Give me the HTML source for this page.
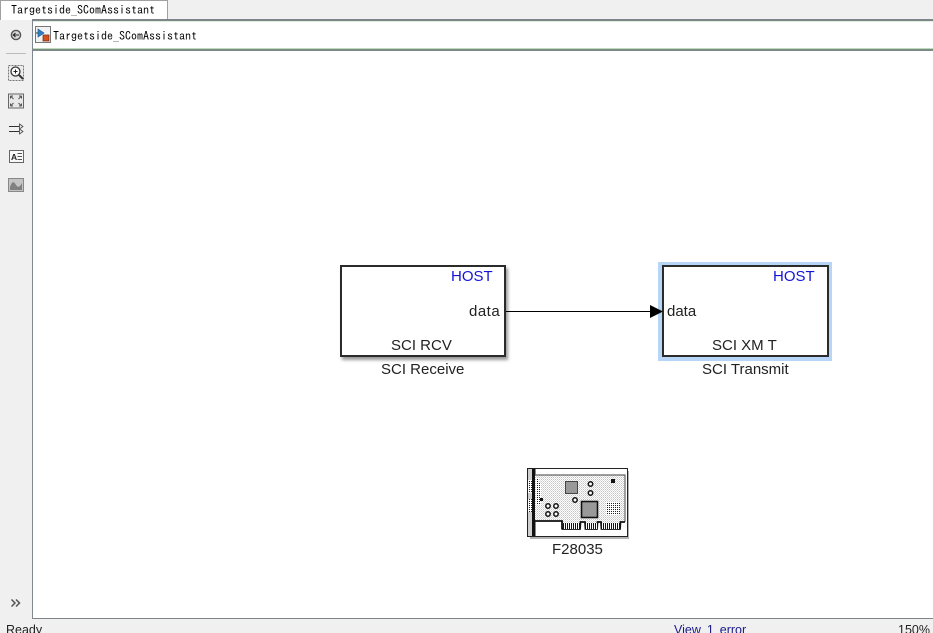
<!DOCTYPE html>
<html>
<head>
<meta charset="utf-8">
<style>
html,body{margin:0;padding:0;width:933px;height:633px;overflow:hidden;background:#f0f0f0;}
body{position:relative;font-family:"Liberation Sans",sans-serif;color:#1a1a1a;}
.a{position:absolute;white-space:nowrap;}
.mono{font:12px/12px "IPAGothic","Liberation Mono",monospace;color:#000;}
.block{position:absolute;box-sizing:border-box;background:#fff;border:2px solid #2b2b2b;box-shadow:2px 3px 3px rgba(0,0,0,.4);}
.t{font-size:15px;line-height:16px;color:#222;}
.b{color:#1414d8;}
.s{font-size:12.500px;line-height:15px;top:623px;}
</style>
</head>
<body>
<div class="a" style="left:0;top:0;width:933px;height:20px;background:#f0f0f0"></div>
<div class="a" style="left:0;top:0;width:168px;height:20px;box-sizing:border-box;background:#fff;border:1px solid #a0a0a0;border-bottom:none"></div>
<div class="a mono" style="left:11px;top:4px">Targetside_SComAssistant</div>

<div class="a" style="left:32px;top:19px;width:901px;height:600px;box-sizing:border-box;background:#fff;border-left:1px solid #7f8790;border-top:2px solid #80858c;border-bottom:1px solid #80858c"></div>
<div class="a" style="left:33px;top:21px;width:900px;height:1px;background:#dcefdc"></div>
<div class="a" style="left:33px;top:48px;width:900px;height:1px;background:#bcdcbc"></div>
<div class="a" style="left:33px;top:49px;width:900px;height:2px;background:#7f8a86"></div>

<svg class="a" style="left:35px;top:26px" width="16" height="17" viewBox="0 0 16 17">
<rect x=".5" y=".5" width="15" height="16" fill="#f2f2f2" stroke="#777"/>
<path d="M3 3 L9 7 L3 11Z" fill="#2f7fc0" stroke="#1c5f9c" stroke-width=".7"/>
<path d="M1 7H3" stroke="#333"/>
<rect x="8" y="9" width="6" height="6" fill="#d8501c" stroke="#6b2a10" stroke-width=".7"/>
</svg>
<div class="a mono" style="left:53px;top:30px">Targetside_SComAssistant</div>

<!-- left toolbar -->
<svg class="a" style="left:0;top:24px" width="32" height="600" viewBox="0 0 32 600">
<circle cx="16" cy="11" r="4.6" fill="#d8d8d8" stroke="#555" stroke-width="1.4"/>
<path d="M19 11H13.5M15.5 9L13.3 11L15.5 13" fill="none" stroke="#222" stroke-width="1.1"/>
<path d="M6 29.500H26" stroke="#bbb"/>
<rect x="8.500" y="41.500" width="15" height="15" fill="#ececec" stroke="#777" stroke-dasharray="2 1"/>
<circle cx="15.500" cy="47.500" r="4.500" fill="#fff" stroke="#333" stroke-width="1.300"/>
<path d="M13.500 47.500H17.500M15.500 45.500V49.500" stroke="#222"/>
<path d="M19 51L23 55" stroke="#333" stroke-width="2"/>
<rect x="8.500" y="70" width="15" height="14" fill="#e8e8e8" stroke="#666"/>
<path d="M10.500 72L13.500 75M10.500 72H13M10.500 72V74.500M21.500 72L18.500 75M21.500 72H19M21.500 72V74.500M10.500 82L13.500 79M10.500 82H13M10.500 82V79.500M21.500 82L18.500 79M21.500 82H19M21.500 82V79.500" fill="none" stroke="#555"/>
<path d="M9 102.500H21M9 107.500H21" stroke="#333"/>
<path d="M19.500 100L23 102.500L19.500 105ZM19.500 105L23 107.500L19.500 110Z" fill="#eee" stroke="#444" stroke-width=".8"/>
<rect x="9.500" y="126.500" width="14" height="12" fill="#f8f8f8" stroke="#666"/>
<text x="11" y="136" font-family="Liberation Sans" font-size="8.500" font-weight="bold" fill="#222">A</text>
<path d="M17.500 129.500H22M17.500 132.500H22M17.500 135.500H22" stroke="#555"/>
<rect x="8.500" y="154.500" width="15" height="13" fill="#c4c4c4" stroke="#888"/>
<path d="M10 163C12 157 14 157 16 161C18 164 20 163 22 159V166H10Z" fill="#808080"/>
<path d="M11.500 575.500L15 579L11.500 582.500M16 575.500L19.500 579L16 582.500" fill="none" stroke="#555" stroke-width="1.500"/>
</svg>

<!-- block 1 -->
<div class="block" style="left:340px;top:265px;width:166px;height:92px"></div>
<div class="a t b" style="left:451px;top:269px">HOST</div>
<div class="a t" style="left:469px;top:304px;letter-spacing:.5px">data</div>
<div class="a t" style="left:391px;top:338px">SCI RCV</div>
<div class="a t" style="left:381px;top:362px">SCI Receive</div>

<!-- wire -->
<div class="a" style="left:506px;top:311px;width:146px;height:1px;background:#000"></div>

<!-- block 2 -->
<div class="a" style="left:658px;top:262px;width:174px;height:99px;background:#b7d5f7"></div>
<div class="block" style="left:662px;top:265px;width:167px;height:92px;box-shadow:none"></div>
<svg class="a" style="left:650px;top:304px" width="13" height="15"><path d="M0 1L13 7.500L0 14Z" fill="#000"/></svg>
<div class="a t b" style="left:773px;top:269px">HOST</div>
<div class="a t" style="left:667px;top:304px">data</div>
<div class="a t" style="left:712px;top:338px">SCI XM T</div>
<div class="a t" style="left:702px;top:362px">SCI Transmit</div>

<!-- F28035 -->
<svg class="a" style="left:525px;top:465px" width="108" height="78" viewBox="0 0 108 78">
<defs>
<pattern id="d" width="2" height="2" patternUnits="userSpaceOnUse"><rect width="2" height="2" fill="#fff"/><rect width="1" height="1" fill="#c4c4c4"/><rect x="1" y="1" width="1" height="1" fill="#dcdcdc"/></pattern>
<pattern id="k" width="2" height="2" patternUnits="userSpaceOnUse"><rect width="2" height="2" fill="#fff"/><rect width="1" height="1" fill="#222"/></pattern>
<pattern id="c" width="2" height="1" patternUnits="userSpaceOnUse"><rect width="2" height="1" fill="#fff"/><rect width="1" height="1" fill="#111"/></pattern>
</defs>
<rect x="5" y="6" width="99" height="68" fill="#777" opacity=".55"/>
<rect x="2.500" y="3.500" width="100" height="68" fill="#fff" stroke="#222"/>
<rect x="3" y="4" width="4" height="67" fill="#d0d0d0"/>
<rect x="3" y="15" width="4" height="13" fill="url(#k)"/>
<rect x="3" y="34" width="4" height="13" fill="url(#k)"/>
<rect x="7" y="4" width="3.500" height="67" fill="#111"/>
<path d="M10 10H100V57H95V64H76V57H72V64H60V57H55V64H37V56H10Z" fill="url(#d)"/>
<path d="M10 10H100V57" fill="none" stroke="#666" stroke-width="1.200"/>
<path d="M10 56H37V64.500M37 64H55L55.500 57H60L60.500 64H72L72.500 57H76L76.500 64H95L95.500 57H100" fill="none" stroke="#111" stroke-width="1.800"/>
<rect x="38" y="58" width="17" height="6" fill="url(#c)"/>
<rect x="60" y="58" width="12" height="6" fill="url(#c)"/>
<rect x="77" y="58" width="18" height="6" fill="url(#c)"/>
<rect x="11" y="13" width="3" height="27" fill="url(#k)"/>
<rect x="14" y="18" width="2" height="22" fill="url(#k)"/>
<rect x="15" y="33" width="3" height="3" fill="#111"/>
<rect x="40.500" y="16.500" width="12" height="12" fill="#999" stroke="#444"/>
<rect x="56.500" y="36.500" width="16" height="16" fill="#999" stroke="#111" stroke-width="1.600"/>
<circle cx="65.500" cy="19" r="2.200" fill="#fff" stroke="#111" stroke-width="1.500"/>
<circle cx="65.500" cy="28" r="2.200" fill="#fff" stroke="#111" stroke-width="1.500"/>
<circle cx="50" cy="35" r="2.200" fill="#fff" stroke="#111" stroke-width="1.500"/>
<circle cx="23" cy="41" r="2.200" fill="#fff" stroke="#111" stroke-width="1.500"/>
<circle cx="31" cy="41" r="2.200" fill="#fff" stroke="#111" stroke-width="1.500"/>
<circle cx="23" cy="49" r="2.200" fill="#fff" stroke="#111" stroke-width="1.500"/>
<circle cx="31" cy="49" r="2.200" fill="#fff" stroke="#111" stroke-width="1.500"/>
<rect x="86" y="14" width="4" height="4" fill="#111"/>
<rect x="81" y="37" width="14" height="13" fill="url(#k)"/>
</svg>
<div class="a t" style="left:552px;top:542px">F28035</div>

<!-- status -->
<div class="a s" style="left:6px;color:#222">Ready</div>
<div class="a s" style="left:674px;color:#1a1a8c;word-spacing:2.500px">View 1 error</div>
<div class="a s" style="left:898px;color:#222">150%</div>
</body>
</html>
